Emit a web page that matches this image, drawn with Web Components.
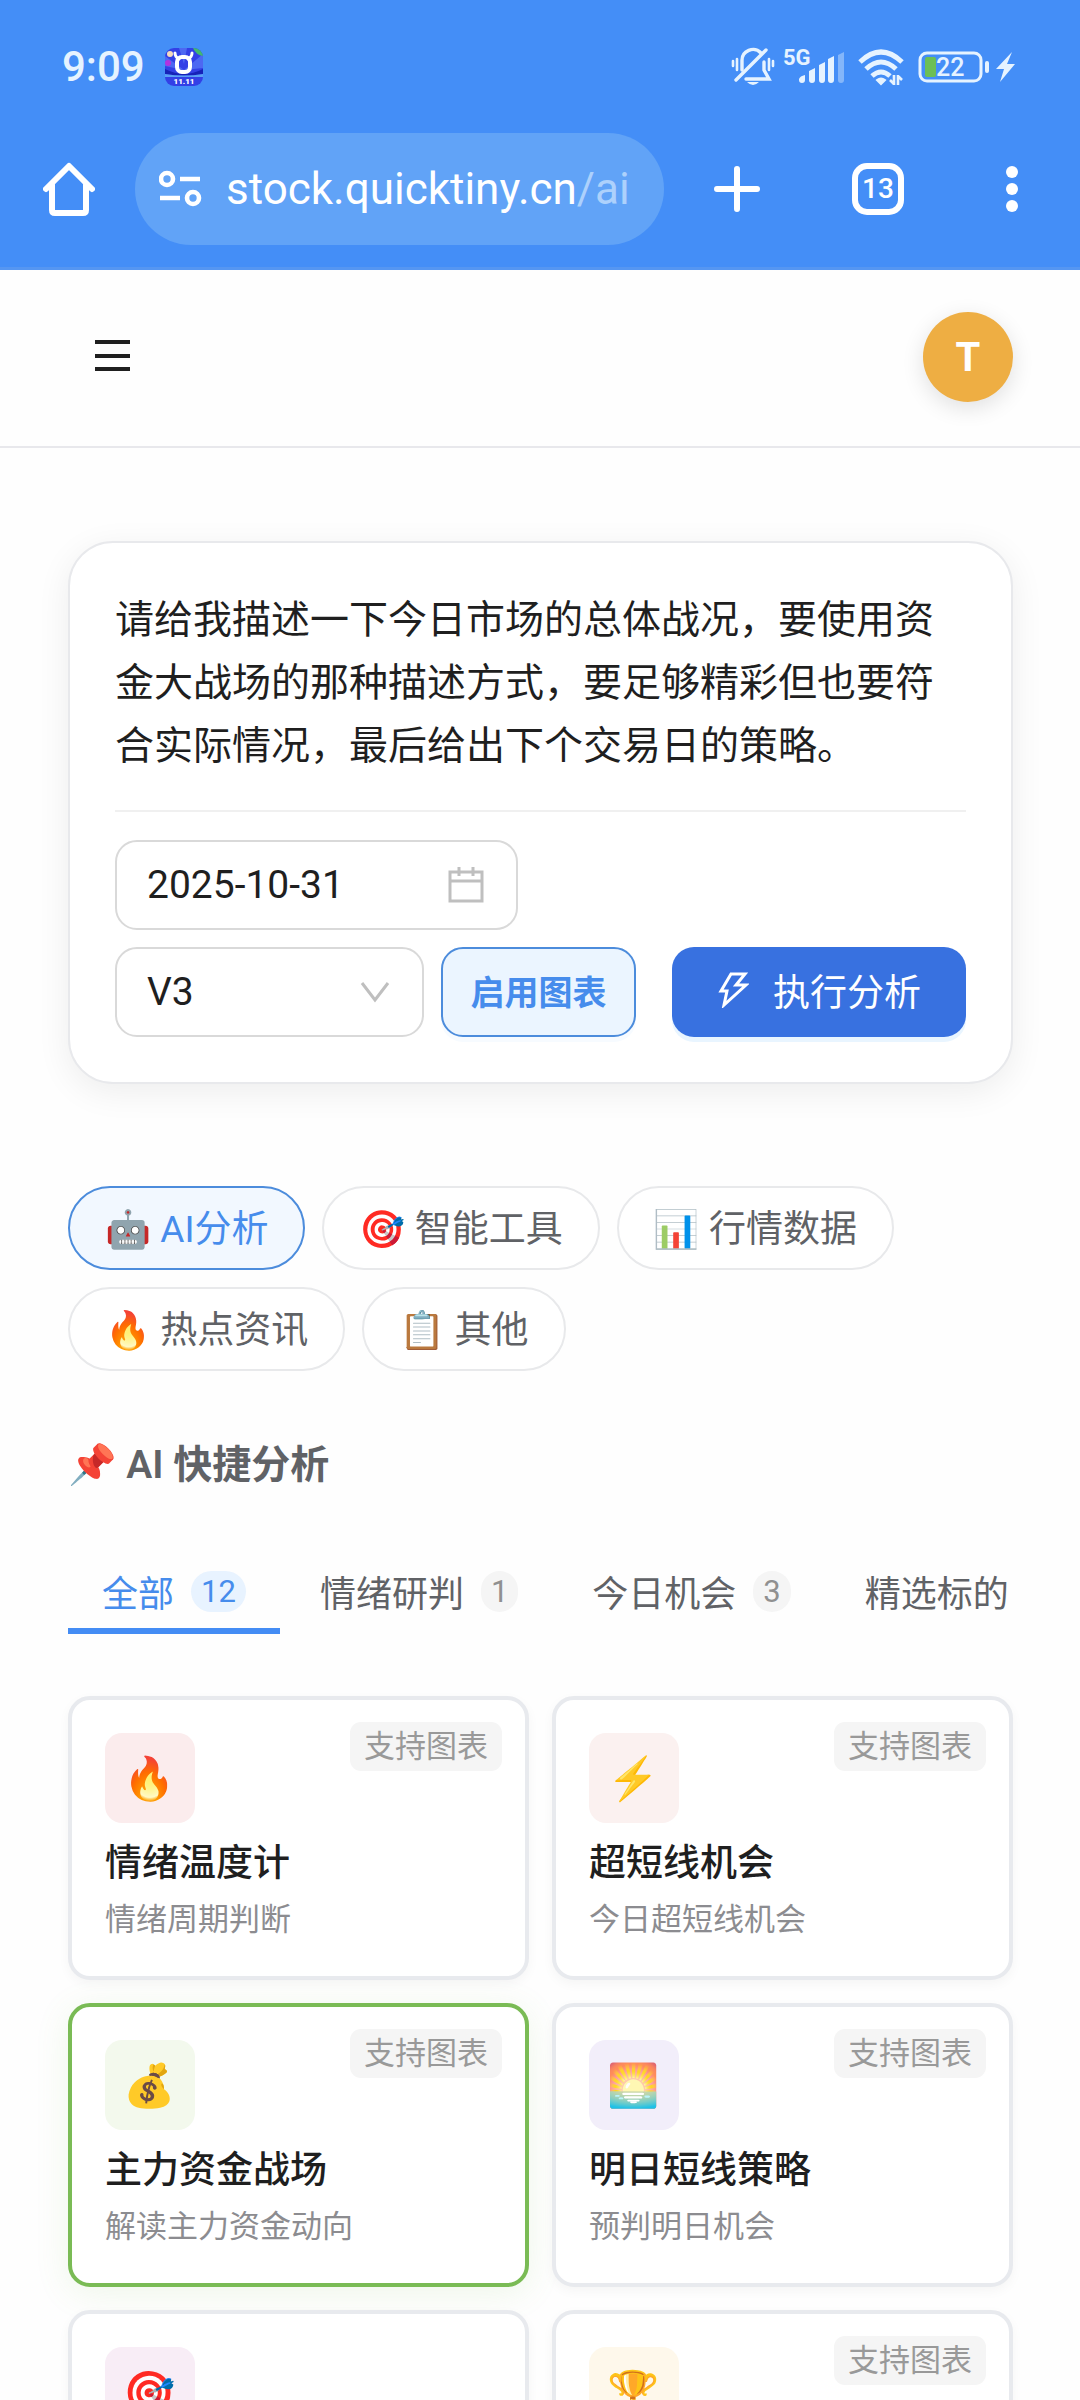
<!DOCTYPE html>
<html lang="zh-CN">
<head>
<meta charset="utf-8">
<meta name="viewport" content="width=device-width, initial-scale=1">
<title>AI 快捷分析</title>
<style>
  html, body {
    height: 100%;
    margin: 0;
  }

  body {
    background: #fefefe;
    color: #606266;
    font-family: Roboto, "Noto Sans CJK SC", "Noto Color Emoji", sans-serif;
    overflow: hidden;
  }
</style>
</head>
<body>
<app-page>
  <prompt-card></prompt-card>
  <category-list>
    <category-pill active>🤖 AI分析</category-pill>
    <category-pill>🎯 智能工具</category-pill>
    <category-pill>📊 行情数据</category-pill>
    <category-pill>🔥 热点资讯</category-pill>
    <category-pill>📋 其他</category-pill>
  </category-list>
  <section-title>📌 AI 快捷分析</section-title>
  <tab-list>
    <tab-item active count="12">全部</tab-item>
    <tab-item count="1">情绪研判</tab-item>
    <tab-item count="3">今日机会</tab-item>
    <tab-item>精选标的</tab-item>
  </tab-list>
  <card-grid>
    <quick-card icon="🔥" color="#fbeced" tag="支持图表" name="情绪温度计">情绪周期判断</quick-card>
    <quick-card icon="⚡" color="#fbf1f0" tag="支持图表" name="超短线机会">今日超短线机会</quick-card>
    <quick-card active icon="💰" color="#f3f9ed" tag="支持图表" name="主力资金战场">解读主力资金动向</quick-card>
    <quick-card icon="🌅" color="#f2eefa" tag="支持图表" name="明日短线策略">预判明日机会</quick-card>
    <quick-card icon="🎯" color="#f8edf6"></quick-card>
    <quick-card icon="🏆" color="#fef8eb" tag="支持图表"></quick-card>
  </card-grid>
</app-page>

<script>
class StatusBar extends HTMLElement {
  constructor () {
    super()
    this.shadow = this.attachShadow({ mode: 'open' })
  }

  connectedCallback () {
    this.render()
  }

  render () {
    this.shadow.innerHTML =
      /*html*/`
      <style>
        :host {
          align-items: center;
          color: #e6f3ff;
          display: flex;
          height: 133px;
          justify-content: space-between;
          padding: 0 64px 0 62px;
        }

        svg {
          display: block;
          overflow: visible;
        }

        .side, .signal {
          align-items: center;
          display: flex;
          gap: 14px;
        }

        .left {
          gap: 20px;
        }

        .signal {
          gap: 8px;
        }

        time {
          font-size: 42px;
          font-weight: 500;
          line-height: 50px;
        }
      </style>

      <div class="side left">
        <time>9:09</time>
        <svg width="38" height="38" viewBox="0 0 38 38">
          <defs><clipPath id="app"><rect width="38" height="38" rx="9"/></clipPath></defs>
          <g clip-path="url(#app)">
            <rect width="38" height="38" fill="#3340e6"/>
            <path d="M19 22 0 8v10zM19 22 38 6v14zM14 0h8l-3 16z" fill="#4d68f2"/>
            <path d="M0 21q10 5 19 5t19-5v5q-19 3-38 0z" fill="#1622b8"/>
            <path d="M0 26q19 3 38 0v3H0z" fill="#5aa0f5"/>
            <circle cx="5" cy="6" r="3" fill="#f3d9bd"/>
            <circle cx="3" cy="15" r="3" fill="#b133e0"/>
            <path d="M28 0h10v8q-7-1-10-8z" fill="#41b871"/>
            <path d="M10 5q0 4 4 6M27 5q0 4-4 6" stroke="#fff" stroke-width="3" fill="none" stroke-linecap="round"/>
            <rect x="12" y="9" width="13" height="15" rx="5" fill="none" stroke="#fff" stroke-width="4"/>
            <text x="19" y="36" text-anchor="middle" font-size="8" font-weight="900" fill="#fff">11.11</text>
          </g>
        </svg>
      </div>
      <div class="side">
        <div class="signal">
          <svg width="44" height="40" viewBox="0 0 44 40" fill="none" stroke="currentColor" stroke-width="3.4" stroke-linecap="round">
            <path d="M2 14v5M6 12v11M38 12v11M42 14v5" stroke-width="2.6"/>
            <path d="M11 23V14a11 11 0 0 1 19-8M33 15v8l5 9H15"/>
            <path d="M5 33 35 3"/>
            <path d="M16 35h12q-6 6-12 0z" fill="currentColor" stroke="none"/>
          </svg>
          <svg width="61" height="36" viewBox="0 0 61 36" fill="currentColor">
            <text x="0" y="16" font-size="22" font-weight="700">5G</text>
            <path d="M16 30q1-3 6-4v5q0 3-3 3t-3-3zM26 22l6-3v12q0 3-3 3t-3-3zM36 16l6-3v18q0 3-3 3t-3-3zM45 10l6-3v24q0 3-3 3t-3-3z"/>
            <path d="M55 6l6-3v28q0 3-3 3t-3-3z" opacity=".4"/>
          </svg>
        </div>
        <svg width="46" height="38" viewBox="0 0 46 38" fill="none" stroke="currentColor" stroke-width="5">
          <path d="M2 14q21-20 42 0M8 21q15-14 30 0M14 28q9-8 18 0"/>
          <path d="M19 32q4-3 8 0l-4 4z" fill="currentColor" stroke-width="2"/>
          <path d="M36 27v10M40 27v10M36 36l-4-4M40 28l4 4" stroke-width="2.6"/>
        </svg>
        <svg width="98" height="32" viewBox="0 0 98 32">
          <rect x="2" y="2" width="61" height="28" rx="7" fill="none" stroke="currentColor" stroke-width="3"/>
          <rect x="67" y="10" width="4" height="12" rx="2" fill="currentColor"/>
          <rect x="7" y="6" width="11" height="20" rx="2" fill="#6cbf55"/>
          <text x="18" y="25" font-size="25" font-weight="500" fill="currentColor">22</text>
          <path d="M94 1 78 18h8l-4 13 15-18h-8z" fill="currentColor"/>
        </svg>
      </div>`
  }
}

class BrowserBar extends HTMLElement {
  constructor () {
    super()
    this.shadow = this.attachShadow({ mode: 'open' })
  }

  connectedCallback () {
    this.render()
  }

  render () {
    this.shadow.innerHTML =
      /*html*/`
      <style>
        :host {
          align-items: center;
          border-bottom: 3px solid #5596f2;
          box-sizing: border-box;
          color: #fff;
          display: flex;
          gap: 40px;
          height: 137px;
          padding: 0 62px 22px 43px;
        }

        button {
          background: none;
          border: 0;
          color: inherit;
          font: inherit;
          margin: 0;
          padding: 0;
        }

        svg {
          display: block;
        }

        .url {
          align-items: center;
          background: #61a3f7;
          border-radius: 56px;
          color: inherit;
          display: flex;
          flex: 1;
          font-size: 44px;
          gap: 24px;
          height: 112px;
          min-width: 0;
          padding-left: 24px;
          text-decoration: none;
          white-space: nowrap;
        }

        .path {
          color: #add1fc;
        }

        .actions {
          display: flex;
          gap: 92px;
          padding-left: 10px;
        }

        .tabs {
          border: 6px solid #fff;
          border-radius: 15px;
          box-sizing: border-box;
          font-size: 28px;
          font-weight: 500;
          height: 52px;
          line-height: 40px;
          width: 52px;
        }
      </style>

      <button aria-label="主页">
        <svg width="52" height="54" viewBox="0 0 52 54" fill="none" stroke="currentColor" stroke-width="6" stroke-linejoin="round" stroke-linecap="round">
          <path d="M3 27 26 4l23 23"/>
          <path d="M9 23v25q0 3 3 3h28q3 0 3-3V23"/>
        </svg>
      </button>
      <a class="url" href="#">
        <svg width="43" height="38" viewBox="0 0 43 38" fill="none" stroke="currentColor" stroke-width="4.6">
          <circle cx="8" cy="9" r="6"/>
          <path d="M21 9h20M1 28h20"/>
          <circle cx="34" cy="28" r="6"/>
        </svg>
        <span>stock.quicktiny.cn<span class="path">/ai</span></span>
      </a>
      <div class="actions">
        <button aria-label="新建标签页">
          <svg width="46" height="52" viewBox="0 0 46 52" stroke="currentColor" stroke-width="6" stroke-linecap="round">
            <path d="M23 6v40M3 26h40"/>
          </svg>
        </button>
        <button class="tabs">13</button>
        <button aria-label="菜单">
          <svg width="22" height="52" viewBox="0 0 22 52" fill="currentColor">
            <circle cx="16" cy="9" r="6"/><circle cx="16" cy="26" r="6"/><circle cx="16" cy="43" r="6"/>
          </svg>
        </button>
      </div>`
  }
}

class SiteHeader extends HTMLElement {
  constructor () {
    super()
    this.shadow = this.attachShadow({ mode: 'open' })
  }

  connectedCallback () {
    this.render()
  }

  render () {
    this.shadow.innerHTML =
      /*html*/`
      <style>
        :host {
          align-items: center;
          border-bottom: 2px solid #e8e8ec;
          box-sizing: border-box;
          display: flex;
          height: 178px;
          justify-content: space-between;
          padding: 0 67px 2px 94px;
        }

        button {
          background: none;
          border: 0;
          padding: 0;
        }

        .avatar {
          background: #eeae43;
          border-radius: 50%;
          box-shadow: 0 6px 22px rgba(0, 0, 0, .12);
          color: #fff;
          font-family: inherit;
          font-size: 40px;
          font-weight: 700;
          height: 90px;
          width: 90px;
        }
      </style>

      <button aria-label="导航">
        <svg width="36" height="32" viewBox="0 0 36 32" stroke="#1f1f1f" stroke-width="4">
          <path d="M1 2h35M1 16h35M1 29h35"/>
        </svg>
      </button>
      <button class="avatar">T</button>`
  }
}

class AppPage extends HTMLElement {
  constructor () {
    super()
    this.shadow = this.attachShadow({ mode: 'open' })
  }

  connectedCallback () {
    this.render()
  }

  render () {
    this.shadow.innerHTML =
      /*html*/`
      <style>
        :host {
          display: flex;
          flex-direction: column;
          height: 100%;
        }

        .system {
          background: #448ef7;
        }

        main {
          flex: 1;
          min-height: 0;
          overflow: hidden;
          padding: 93px 67px 0 68px;
        }
      </style>

      <div class="system">
        <status-bar></status-bar>
        <browser-bar></browser-bar>
      </div>
      <site-header></site-header>
      <main><slot></slot></main>`
  }
}

class PromptCard extends HTMLElement {
  constructor () {
    super()
    this.shadow = this.attachShadow({ mode: 'open' })
  }

  connectedCallback () {
    this.render()
  }

  render () {
    this.shadow.innerHTML =
      /*html*/`
      <style>
        * {
          box-sizing: border-box;
        }

        :host {
          background: #fff;
          border: 2px solid #e8e9ec;
          border-radius: 45px;
          box-shadow: 0 8px 34px rgba(0, 0, 0, .07);
          display: block;
          padding: 46px 45px 45px;
        }

        textarea, input, select, button {
          color: #1f1f1f;
          font-family: inherit;
          font-size: 39px;
          margin: 0;
          outline: 0;
        }

        textarea {
          background: none;
          border: 0;
          display: block;
          line-height: 63px;
          overflow: hidden;
          padding: 0;
          resize: none;
          width: 100%;
        }

        .controls {
          align-items: flex-end;
          border-top: 2px solid #f0f0f0;
          display: flex;
          gap: 36px;
          margin-top: 32px;
          padding-top: 28px;
        }

        .options {
          display: flex;
          flex: 1;
          flex-wrap: wrap;
          gap: 17px;
        }

        .field {
          color: #bfbfbf;
          position: relative;
        }

        .field input, .field select {
          appearance: none;
          background: #fff;
          border: 2px solid #d9d9d9;
          border-radius: 22px;
          height: 90px;
          padding: 0 30px;
          width: 100%;
        }

        .field svg {
          pointer-events: none;
          position: absolute;
          right: 34px;
          top: 27px;
        }

        .date {
          width: 403px;
        }

        .model {
          width: 309px;
        }

        button {
          border-radius: 22px;
          height: 90px;
        }

        .chart {
          background: #ebf5ff;
          border: 2px solid #4c8cdc;
          box-shadow: 0 5px 0 #f7fbff;
          color: #468cec;
          flex: 1;
          font-size: 34px;
          font-weight: 700;
          padding: 0 0 4px;
          white-space: nowrap;
        }

        .run {
          align-items: center;
          background: #3871e0;
          border: 0;
          box-shadow: 0 5px 0 #e9f5ff;
          color: #fff;
          display: flex;
          font-size: 37px;
          gap: 24px;
          padding: 0 45px 4px;
        }
      </style>

      <textarea rows="3" aria-label="分析指令">请给我描述一下今日市场的总体战况，要使用资金大战场的那种描述方式，要足够精彩但也要符合实际情况，最后给出下个交易日的策略。</textarea>
      <div class="controls">
        <div class="options">
          <div class="field date">
            <input type="text" value="2025-10-31" aria-label="日期">
            <svg width="36" height="36" viewBox="0 0 36 36" fill="none" stroke="currentColor" stroke-width="3">
              <path d="M2 5h32v29H2zM2 14h32M11 0v9M25 0v9"/>
            </svg>
          </div>
          <div class="field model">
            <select aria-label="模型"><option>V3</option></select>
            <svg width="30" height="36" viewBox="0 0 30 36" fill="none" stroke="currentColor" stroke-width="3">
              <path d="M2 9l13 17L28 9"/>
            </svg>
          </div>
          <button class="chart" aria-pressed="true">启用图表</button>
        </div>
        <button class="run">
          <svg width="32" height="36" viewBox="0 0 32 36" fill="none" stroke="currentColor" stroke-width="3">
            <path d="M14 2h14l-9 11h10L7 33l3-14H4z"/>
          </svg>
          执行分析
        </button>
      </div>`
  }
}

class CategoryList extends HTMLElement {
  constructor () {
    super()
    this.shadow = this.attachShadow({ mode: 'open' })
  }

  connectedCallback () {
    this.shadow.innerHTML =
      /*html*/`
      <style>
        :host {
          display: flex;
          flex-wrap: wrap;
          gap: 17px;
          margin-top: 102px;
        }
      </style>
      <slot></slot>`
  }
}

class CategoryPill extends HTMLElement {
  constructor () {
    super()
    this.shadow = this.attachShadow({ mode: 'open' })
  }

  connectedCallback () {
    this.shadow.innerHTML =
      /*html*/`
      <style>
        :host {
          display: block;
        }

        button {
          background: #fff;
          border: 2px solid #e8e9eb;
          border-radius: 42px;
          color: #606266;
          display: block;
          font-family: inherit;
          font-size: 37px;
          height: 84px;
          margin: 0;
          padding: 0 35px 4px;
          white-space: nowrap;
        }

        :host([active]) button {
          background: #f2f8ff;
          border-color: #4c8cdc;
          color: #468cec;
        }
      </style>
      <button><slot></slot></button>`
  }
}

class SectionTitle extends HTMLElement {
  constructor () {
    super()
    this.shadow = this.attachShadow({ mode: 'open' })
  }

  connectedCallback () {
    this.shadow.innerHTML =
      /*html*/`
      <style>
        :host {
          display: block;
          margin-top: 66px;
        }

        h2 {
          font-size: 39px;
          font-weight: 600;
          line-height: 56px;
          margin: 0;
        }
      </style>
      <h2><slot></slot></h2>`
  }
}

class TabList extends HTMLElement {
  constructor () {
    super()
    this.shadow = this.attachShadow({ mode: 'open' })
  }

  connectedCallback () {
    this.shadow.innerHTML =
      /*html*/`
      <style>
        :host {
          display: flex;
          gap: 6px;
          margin-top: 57px;
          overflow: hidden;
        }
      </style>
      <slot></slot>`
  }
}

class TabItem extends HTMLElement {
  constructor () {
    super()
    this.shadow = this.attachShadow({ mode: 'open' })
  }

  get count () {
    return this.getAttribute('count')
  }

  connectedCallback () {
    this.shadow.innerHTML =
      /*html*/`
      <style>
        :host {
          display: block;
          flex: none;
        }

        button {
          align-items: center;
          background: none;
          border: 0;
          color: #606266;
          display: flex;
          font-family: inherit;
          font-size: 36px;
          gap: 17px;
          height: 84px;
          margin: 0;
          padding: 0 34px 2px;
        }

        .count {
          background: #f5f5f5;
          border-radius: 21px;
          color: #909090;
          font-size: 31px;
          line-height: 41px;
          padding: 0 10px;
        }

        :host([active]) button {
          box-shadow: inset 0 -6px #448cf4;
          color: #468cec;
        }

        :host([active]) .count {
          background: #e8f3ff;
          color: #468cec;
        }
      </style>
      <button>
        <slot></slot>
        ${this.count ? `<span class="count">${this.count}</span>` : ''}
      </button>`
  }
}

class CardGrid extends HTMLElement {
  constructor () {
    super()
    this.shadow = this.attachShadow({ mode: 'open' })
  }

  connectedCallback () {
    this.shadow.innerHTML =
      /*html*/`
      <style>
        :host {
          display: grid;
          gap: 23px;
          grid-template-columns: 1fr 1fr;
          margin-top: 62px;
        }
      </style>
      <slot></slot>`
  }
}

class QuickCard extends HTMLElement {
  constructor () {
    super()
    this.shadow = this.attachShadow({ mode: 'open' })
  }

  connectedCallback () {
    this.render()
  }

  render () {
    const tag = this.getAttribute('tag')

    this.shadow.innerHTML =
      /*html*/`
      <style>
        :host {
          background: #fff;
          border: 4px solid #e8eaee;
          border-radius: 22px;
          box-shadow: 0 4px 12px rgba(0, 0, 0, .04);
          box-sizing: border-box;
          display: block;
          min-height: 284px;
          padding: 33px;
          position: relative;
        }

        :host([active]) {
          border-color: #7abb55;
          box-shadow: 0 6px 34px rgba(122, 187, 85, .12);
        }

        .icon {
          align-items: center;
          border-radius: 17px;
          display: flex;
          font-size: 42px;
          height: 90px;
          justify-content: center;
          width: 90px;
        }

        h3 {
          color: #1f1f1f;
          font-size: 37px;
          font-weight: 500;
          line-height: 52px;
          margin: 15px 0 6px;
        }

        p {
          color: #8c8c90;
          font-size: 31px;
          line-height: 47px;
          margin: 0;
        }

        .tag {
          background: #f5f5f5;
          border-radius: 11px;
          color: #999;
          font-size: 31px;
          line-height: 49px;
          padding: 0 14px;
          position: absolute;
          right: 23px;
          top: 22px;
        }
      </style>

      <div class="icon" style="background: ${this.getAttribute('color')}">${this.getAttribute('icon')}</div>
      ${tag ? `<span class="tag">${tag}</span>` : ''}
      <h3>${this.getAttribute('name') || ''}</h3>
      <p><slot></slot></p>`
  }
}

customElements.define('status-bar', StatusBar)
customElements.define('browser-bar', BrowserBar)
customElements.define('site-header', SiteHeader)
customElements.define('app-page', AppPage)
customElements.define('prompt-card', PromptCard)
customElements.define('category-list', CategoryList)
customElements.define('category-pill', CategoryPill)
customElements.define('section-title', SectionTitle)
customElements.define('tab-list', TabList)
customElements.define('tab-item', TabItem)
customElements.define('card-grid', CardGrid)
customElements.define('quick-card', QuickCard)
</script>
</body>
</html>
